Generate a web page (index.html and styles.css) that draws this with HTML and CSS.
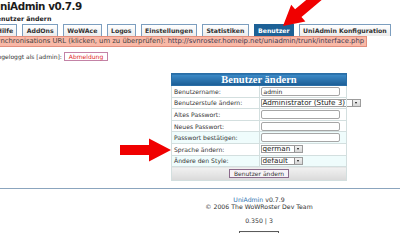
FILE: index.html
```html
<!DOCTYPE html>
<html lang="de">
<head>
<meta charset="utf-8">
<title>UniAdmin</title>
<link rel="stylesheet" href="styles.css">
</head>
<body>
<div class="page">
  <h1 class="title">UniAdmin v0.7.9</h1>
  <h2 class="subtitle">Benutzer ändern</h2>
  <ul class="tabs">
    <li class="tab">Hilfe</li>
    <li class="tab">AddOns</li>
    <li class="tab">WoWAce</li>
    <li class="tab">Logos</li>
    <li class="tab">Einstellungen</li>
    <li class="tab">Statistiken</li>
    <li class="tab active">Benutzer</li>
    <li class="tab">UniAdmin Konfiguration</li>
  </ul>
  <div class="sync">Synchronisations URL (klicken, um zu überprüfen): <span class="url">http://svnroster.homeip.net/uniadmin/trunk/interface.php</span></div>
  <div class="login"><span>Eingeloggt als [admin]:</span><span class="logout">Abmeldung</span></div>
  <table class="form">
    <tr><th colspan="2" class="head">Benutzer ändern</th></tr>
    <tr><td class="lbl">Benutzername:</td><td class="val"><span class="input">admin</span></td></tr>
    <tr><td class="lbl">Benutzerstufe ändern:</td><td class="val"><span class="select wide"><span class="sel-text">Administrator (Stufe 3)</span><span class="sel-btn"><i class="tri"></i></span></span></td></tr>
    <tr><td class="lbl">Altes Passwort:</td><td class="val"><span class="input"></span></td></tr>
    <tr><td class="lbl">Neues Passwort:</td><td class="val"><span class="input"></span></td></tr>
    <tr class="alt"><td class="lbl">Passwort bestätigen:</td><td class="val"><span class="input"></span></td></tr>
    <tr><td class="lbl">Sprache ändern:</td><td class="val"><span class="select short"><span class="sel-text">german</span><span class="sel-btn"><i class="tri"></i></span></span></td></tr>
    <tr class="alt"><td class="lbl">Ändere den Style:</td><td class="val"><span class="select short"><span class="sel-text">default</span><span class="sel-btn"><i class="tri"></i></span></span></td></tr>
    <tr><td colspan="2" class="foot"><span class="button">Benutzer ändern</span></td></tr>
  </table>
  <hr class="rule">
  <div class="footer">
    <div class="fline"><span class="link">UniAdmin</span> v0.7.9</div>
    <div class="fline">© 2006 The WoWRoster Dev Team</div>
    <div class="fline stats">0.350 | 3</div>
    <div class="badge"><span class="badge-dot"></span></div>
  </div>
</div>
<svg class="arrows" width="400" height="233" viewBox="0 0 400 233">
  <polygon points="283,26 305.4,21.5 301.5,16.9 324.5,-2.4 318.1,-10 295.1,9.3 291.2,4.7" fill="#f00000"/>
  <polygon points="120,145 149,145 149,138.5 171,150 149,161.5 149,155 120,155" fill="#f00000"/>
</svg>
</body>
</html>
```

FILE: styles.css
```css
html, body {
  margin: 0;
  padding: 0;
  overflow: hidden;
  background: #ffffff;
}
body {
  position: relative;
  width: 400px;
  height: 233px;
  font-family: "DejaVu Sans", Verdana, sans-serif;
  font-size: 6.2px;
  color: #333;
}
.page {
  margin-left: -8px;
  width: 534px;
}
.title {
  margin: 0;
  font-size: 10.4px;
  letter-spacing: -0.45px;
  line-height: 13px;
  font-weight: bold;
  color: #1c1c1c;
}
.subtitle {
  margin: 0;
  font-size: 6.3px;
  line-height: 11px;
  font-weight: bold;
  color: #222;
}
.tabs {
  list-style: none;
  margin: 0;
  padding: 0;
  display: flex;
  gap: 5px;
  height: 12px;
  margin-left: 0.5px;
}
.tab {
  border: 1px solid #7c9ebf;
  border-bottom: none;
  background: linear-gradient(#ffffff, #ececec);
  padding: 0 3.3px;
  line-height: 11px;
  font-weight: bold;
  color: #333;
  white-space: nowrap;
}
.tab.active {
  background: #1d6196;
  border-color: #1d6196;
  color: #ffffff;
}
.sync {
  width: fit-content;
  border: 1px solid #e28e7c;
  background: #f9b8a6;
  padding: 0 2px 0 3px;
  margin-left: -4px;
  line-height: 9px;
  font-size: 6.85px;
  color: #444;
  white-space: nowrap;
}
.url {
  color: #3d3d55;
}
.login {
  margin-top: 5px;
  display: flex;
  align-items: center;
  gap: 2px;
  font-size: 6px;
  line-height: 9px;
  color: #333;
}
.logout {
  border: 1px solid #c383a6;
  background: #fff;
  color: #e02828;
  padding: 0 4px;
  line-height: 7px;
}
.form {
  margin: 12px auto 0;
  width: 176px;
  border-collapse: collapse;
  table-layout: fixed;
}
.form td, .form th {
  padding: 0;
  border: 1px solid #d3dfdf;
}
.head {
  height: 11px;
  background: linear-gradient(#3d8bc8, #1b5d95);
  color: #fff;
  font-family: "Liberation Serif", "Times New Roman", serif;
  font-size: 10.5px;
  font-weight: bold;
  line-height: 10px;
  border-color: #2a6ea6 !important;
}
.form tr {
  height: 11.6px;
}
.form tr.alt td {
  background: #effcfc;
}
.lbl {
  width: 72px;
  padding-left: 2px !important;
  color: #333;
  white-space: nowrap;
  overflow: hidden;
  font-size: 6.1px;
}
.val {
  padding-left: 1px !important;
}
.input {
  display: block;
  width: 75px;
  height: 7px;
  border: 1px solid #a6a6a6;
  border-radius: 2px;
  background: #fff;
  font-size: 6px;
  line-height: 7px;
  padding-left: 2px;
  color: #222;
}
.select {
  display: flex;
  align-items: stretch;
  height: 8px;
  border: 1px solid #9c9c9c;
  background: #fff;
  box-sizing: border-box;
}
.select.wide { width: 100px; }
.select.short { width: 42px; }
.sel-text {
  flex: 1;
  font-size: 7.2px;
  line-height: 6px;
  padding-left: 1px;
  color: #222;
  white-space: nowrap;
  overflow: hidden;
}
.sel-btn {
  width: 7px;
  margin: 0;
  border-left: 1px solid #8c8c8c;
  background: linear-gradient(#f2f2f2, #d6d6d6);
  display: flex;
  align-items: center;
  justify-content: center;
}
.tri {
  width: 0;
  height: 0;
  border-left: 1.5px solid transparent;
  border-right: 1.5px solid transparent;
  border-top: 2px solid #111;
}
.form tr:last-child {
  height: 13.5px;
}
.foot {
  background: linear-gradient(#f2f2f2, #d9d9d9);
  text-align: center;
}
.button {
  display: inline-block;
  border: 1px solid #8b6a8b;
  background: #f7f3f7;
  padding: 0 4px;
  line-height: 7px;
  font-size: 6px;
  color: #333;
  vertical-align: middle;
}
.rule {
  margin: 7px 0 0;
  border: none;
  border-top: 1px solid #8ba5be;
  height: 0;
}
.footer {
  margin-top: 7px;
  text-align: center;
  font-size: 6.2px;
  line-height: 7.5px;
  color: #333;
}
.link {
  color: #2a6fae;
}
.stats {
  margin-top: 6.5px;
}
.badge {
  position: relative;
  margin: 6px auto 0;
  width: 38px;
  height: 14px;
  border: 1px solid #5a5a5a;
  background: linear-gradient(#fafafa, #b8b8b8);
}
.badge-dot {
  position: absolute;
  left: 15px;
  top: 1px;
  width: 6px;
  height: 6px;
  border: 1px solid #444;
  border-radius: 50%;
  background: #fff;
}
.arrows {
  position: absolute;
  left: 0;
  top: 0;
  pointer-events: none;
}
```
